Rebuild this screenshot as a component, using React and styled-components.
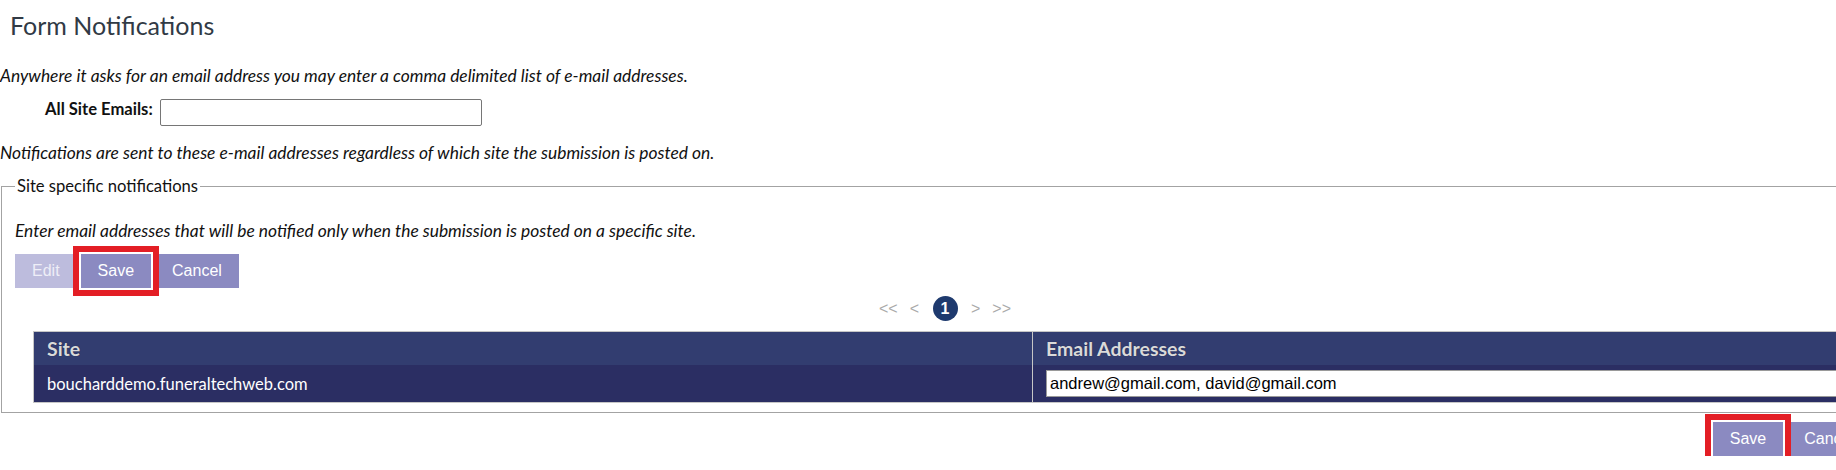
import React from 'react';
import styled, { createGlobalStyle, css } from 'styled-components';

const Global = createGlobalStyle`
  html, body { margin: 0; padding: 0; overflow: hidden; background: #fff; }
  body { font-family: Lato, "Noto Sans", sans-serif; color: #111; }
  * { box-sizing: border-box; }
`;

const Page = styled.div`
  width: 1890px;
  display: flex;
  flex-direction: column;
`;

const Title = styled.h1`
  margin: 0;
  padding-left: 10px;
  font-size: 25px;
  line-height: 50px;
  font-weight: 400;
  color: #313a45;
`;

const Note = styled.p`
  margin: ${(p) => p.$top}px 0 0;
  font-style: italic;
  font-size: 17.4px;
  line-height: 20px;
  color: #111;
`;

const FieldRow = styled.div`
  margin-top: 13px;
  display: flex;
  align-items: flex-start;
  gap: 7px;
  padding-left: 45px;
`;

const Label = styled.label`
  font-weight: 700;
  font-size: 16.6px;
  line-height: 20px;
  color: #111;
`;

const TextInput = styled.input`
  width: 322px;
  height: 27px;
  margin: 0;
  padding: 0 3px;
  border: 1px solid #767676;
  border-radius: 2px;
  font: 16px "Liberation Sans", Arial, sans-serif;
  color: #000;
  background: #fff;
`;

const Fieldset = styled.fieldset`
  margin: 13px 1px 0 1px;
  padding: 0 13px 9px;
  border: 1px solid #a3a3a3;
  min-width: 0;
`;

const Legend = styled.legend`
  padding: 0 2px;
  font-size: 16.6px;
  line-height: 20px;
  color: #111;
`;

const ButtonRow = styled.div`
  display: flex;
  gap: 4px;
  margin-top: ${(p) => p.$top || 0}px;
  justify-content: ${(p) => (p.$end ? 'flex-end' : 'flex-start')};
  padding-right: ${(p) => (p.$end ? 19 : 0)}px;
`;

const Button = styled.button`
  height: 34px;
  margin: 0;
  padding: 0 17px;
  border: none;
  background: ${(p) => (p.disabled ? '#bdbcdd' : '#8b8ac1')};
  color: ${(p) => (p.disabled ? '#eeeef7' : '#fff')};
  font: 16px "Liberation Sans", Arial, sans-serif;
  cursor: pointer;
  ${(p) =>
    p.$marked &&
    css`
      box-shadow: 0 0 0 2px #fff, 0 0 0 8px #e31e25;
      position: relative;
      z-index: 1;
    `}
`;

const Pager = styled.div`
  margin-top: 8px;
  height: 25px;
  display: flex;
  justify-content: center;
  align-items: center;
  gap: 12px;
`;

const PageArrow = styled.span`
  color: #aaaaaa;
  font: 16px/25px "Liberation Sans", Arial, sans-serif;
`;

const PageCurrent = styled.span`
  width: 25px;
  height: 25px;
  margin: 0 1.5px;
  border-radius: 50%;
  background: #1e3a6e;
  color: #fff;
  font: bold 16px/25px "Liberation Sans", Arial, sans-serif;
  text-align: center;
`;

const Table = styled.table`
  margin: 10px 18px 0;
  width: calc(100% - 36px);
  table-layout: fixed;
  border-collapse: separate;
  border-spacing: 0;
  border: 1px solid #c6c6c6;
`;

const Th = styled.th`
  height: 33px;
  padding: 0 13px;
  background: #323d70;
  color: #dadada;
  font-size: 19.5px;
  font-weight: 700;
  text-align: left;
  vertical-align: middle;
  text-shadow: 0 0 1px rgba(0, 0, 0, 0.4);
  ${(p) => p.$first && css`width: 998px;`}
  ${(p) => !p.$first && css`border-left: 1px solid #c6c6c6;`}
`;

const Td = styled.td`
  height: 37px;
  padding: 0 13px;
  background: #2b2e63;
  color: #fff;
  font-size: 16.5px;
  vertical-align: middle;
  ${(p) => !p.$first && css`border-left: 1px solid #c6c6c6;`}
`;

const CellInput = styled.input`
  display: block;
  width: 100%;
  height: 27px;
  margin: 0;
  padding: 0 3px;
  border: 1px solid #9a9a9a;
  background: #fff;
  color: #000;
  font: 16.5px "Liberation Sans", Arial, sans-serif;
`;

export default function App() {
  return (
    <Page>
      <Global />
      <Title>Form Notifications</Title>
      <Note $top={16}>
        Anywhere it asks for an email address you may enter a comma delimited list of e-mail addresses.
      </Note>
      <FieldRow>
        <Label htmlFor="allSite">All Site Emails:</Label>
        <TextInput id="allSite" type="text" defaultValue="" />
      </FieldRow>
      <Note $top={17}>
        Notifications are sent to these e-mail addresses regardless of which site the submission is posted on.
      </Note>
      <Fieldset>
        <Legend>Site specific notifications</Legend>
        <Note $top={25}>
          Enter email addresses that will be notified only when the submission is posted on a specific site.
        </Note>
        <ButtonRow $top={13}>
          <Button disabled>Edit</Button>
          <Button $marked>Save</Button>
          <Button>Cancel</Button>
        </ButtonRow>
        <Pager>
          <PageArrow>&lt;&lt;</PageArrow>
          <PageArrow>&lt;</PageArrow>
          <PageCurrent>1</PageCurrent>
          <PageArrow>&gt;</PageArrow>
          <PageArrow>&gt;&gt;</PageArrow>
        </Pager>
        <Table>
          <thead>
            <tr>
              <Th $first>Site</Th>
              <Th>Email Addresses</Th>
            </tr>
          </thead>
          <tbody>
            <tr>
              <Td $first>boucharddemo.funeraltechweb.com</Td>
              <Td>
                <CellInput type="text" defaultValue="andrew@gmail.com, david@gmail.com" />
              </Td>
            </tr>
          </tbody>
        </Table>
      </Fieldset>
      <ButtonRow $top={9} $end>
        <Button $marked>Save</Button>
        <Button>Cancel</Button>
      </ButtonRow>
    </Page>
  );
}
